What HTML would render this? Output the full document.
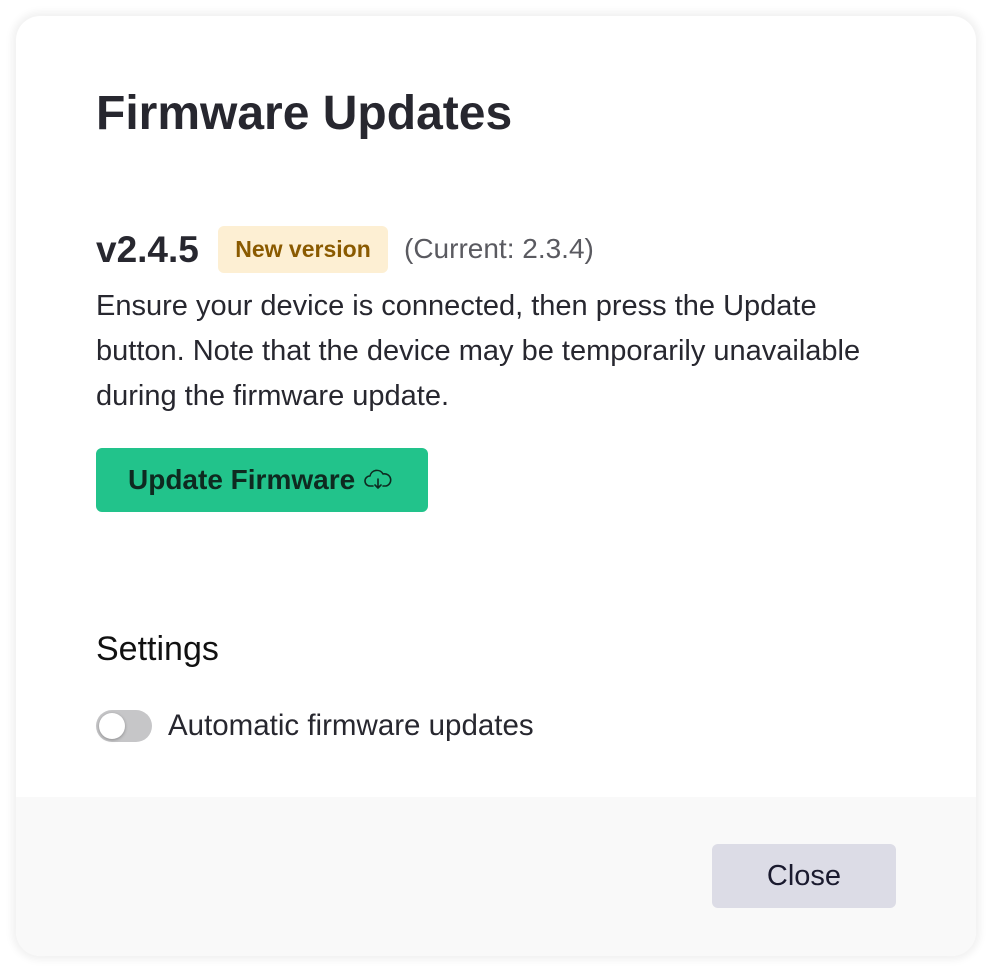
<!DOCTYPE html>
<html><head><meta charset="utf-8"><style>
*{margin:0;padding:0;box-sizing:border-box}
body{width:992px;height:972px;background:#fff;font-family:"Liberation Sans",sans-serif;position:relative;overflow:hidden}
.card{position:absolute;left:16px;top:16px;width:960px;height:940px;border-radius:24px;background:#fff;box-shadow:0 0 8px 4px rgba(0,0,0,0.06);overflow:hidden}
.t{position:absolute;white-space:nowrap}
h1{position:absolute;left:80px;top:68px;font-size:48px;font-weight:bold;color:#27272f;line-height:60px}
.ver{left:80px;top:214px;font-size:37px;font-weight:bold;color:#27272f;line-height:40px}
.badge{position:absolute;left:202px;top:210px;width:170px;height:47px;background:#fdefd3;border-radius:6px;color:#8a5a00;font-size:23px;font-weight:bold;text-align:center;line-height:47px}
.cur{left:388px;top:217px;font-size:28px;color:#5a5a60;line-height:32px}
.p{position:absolute;left:80px;top:268px;width:785px;font-size:29px;line-height:45px;color:#27272f}
.btn{position:absolute;left:80px;top:432px;width:332px;height:64px;background:#22c38b;border-radius:6px;color:#0e2a20;font-size:28px;font-weight:bold;line-height:64px;padding-left:32px}
.btn svg{position:absolute;left:268px;top:21px}
.set{left:80px;top:613px;font-size:34px;color:#111;line-height:40px}
.tog{position:absolute;left:80px;top:694px;width:56px;height:32px;border-radius:16px;background:#c6c6c8}
.tog::after{content:"";position:absolute;left:3px;top:3px;width:26px;height:26px;border-radius:50%;background:#fff;box-shadow:0 1px 3px rgba(0,0,0,.3)}
.auto{left:152px;top:694px;font-size:29.5px;color:#27272f;line-height:32px}
.foot{position:absolute;left:0;top:781px;width:960px;height:159px;background:#f9f9f9}
.close{position:absolute;left:696px;top:828px;width:184px;height:64px;background:#dcdce6;border-radius:6px;font-size:29px;color:#1a1a2e;text-align:center;line-height:64px}
</style></head><body>
<div class="card">
<h1>Firmware Updates</h1>
<div class="t ver">v2.4.5</div>
<div class="badge">New version</div>
<div class="t cur">(Current: 2.3.4)</div>
<div class="p">Ensure your device is connected, then press the Update button. Note that the device may be temporarily unavailable during the firmware update.</div>
<div class="btn">Update Firmware<svg width="30" height="22" viewBox="0 0 30 22" fill="none" stroke="#0e2a20" stroke-width="1.6" stroke-linecap="round" stroke-linejoin="round"><path d="M9 17H6a5 5 0 0 1 0-10 7 7 0 0 1 13-2 5 5 0 0 1 3 12h-3"/><path d="M14 10v9M11 16l3 3 3-3"/></svg></div>
<div class="t set">Settings</div>
<div class="tog"></div>
<div class="t auto">Automatic firmware updates</div>
<div class="foot"></div>
<div class="close">Close</div>
</div>
</body></html>
